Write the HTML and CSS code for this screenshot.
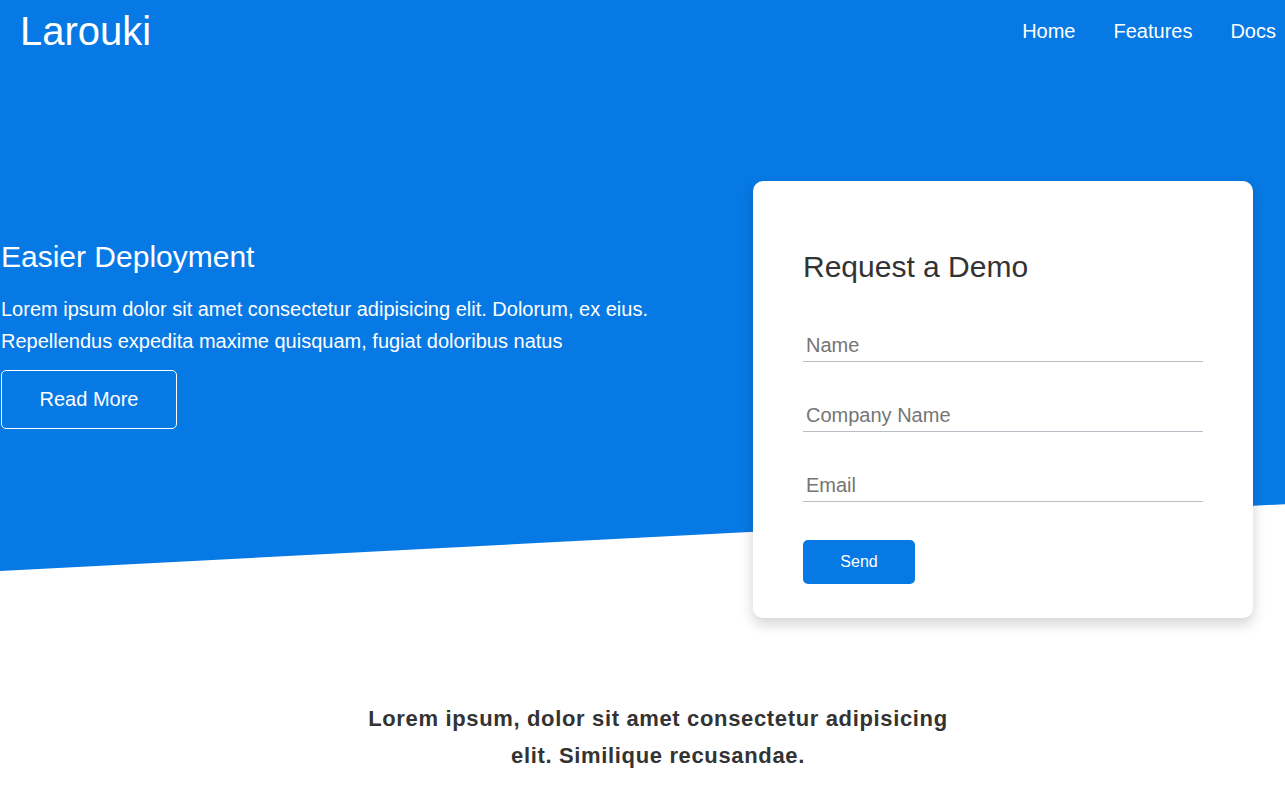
FILE: index.html
```html
<!DOCTYPE html>
<html lang="en">
<head>
<meta charset="UTF-8">
<title>Larouki</title>
<link rel="stylesheet" href="styles.css">
</head>
<body>
<section class="hero">
  <header class="navbar">
    <div class="logo">Larouki</div>
    <nav class="nav">
      <a href="#">Home</a>
      <a href="#">Features</a>
      <a href="#">Docs</a>
    </nav>
  </header>
  <div class="hero-body">
    <div class="intro">
      <h1>Easier Deployment</h1>
      <p>Lorem ipsum dolor sit amet consectetur adipisicing elit. Dolorum, ex eius.<br>Repellendus expedita maxime quisquam, fugiat doloribus natus</p>
      <a href="#" class="btn-outline">Read More</a>
    </div>
    <div class="card">
      <h2>Request a Demo</h2>
      <form class="form">
        <input type="text" placeholder="Name">
        <input type="text" placeholder="Company Name">
        <input type="email" placeholder="Email">
        <button type="button" class="btn-send">Send</button>
      </form>
    </div>
  </div>
</section>
<section class="tagline-wrap">
  <h3 class="tagline">Lorem ipsum, dolor sit amet consectetur adipisicing elit. Similique recusandae.</h3>
</section>
</body>
</html>
```

FILE: styles.css
```css
* { box-sizing: border-box; }
body {
  margin: 0;
  font-family: "Liberation Sans", Arial, sans-serif;
  color: #333;
  background: #fff;
  overflow: hidden;
}
.hero {
  position: relative;
  color: #fff;
}
.hero::before {
  content: "";
  position: absolute;
  left: 0; right: 0; top: 0;
  height: 571px;
  background: #0779e4;
  clip-path: polygon(0 0, 100% 0, 100% 88.3%, 0 100%);
  z-index: -1;
}
.navbar {
  height: 62px;
  display: flex;
  justify-content: space-between;
  align-items: center;
  padding: 0 9px 0 20px;
}
.logo {
  font-size: 40px;
  line-height: 1;
}
.nav {
  display: flex;
  gap: 38px;
}
.nav a {
  color: #fff;
  text-decoration: none;
  font-size: 20px;
  line-height: 1;
}
.hero-body {
  display: flex;
  justify-content: space-between;
  align-items: flex-start;
  padding: 119px 32px 0 1px;
}
.intro {
  margin-top: 58px;
}
.intro h1 {
  margin: 0 0 18px;
  font-size: 30px;
  font-weight: normal;
  line-height: 36px;
}
.intro p {
  margin: 0 0 13px;
  font-size: 20px;
  line-height: 32px;
}
.btn-outline {
  display: inline-flex;
  align-items: center;
  justify-content: center;
  width: 176px;
  height: 59px;
  border: 1px solid #fff;
  border-radius: 5px;
  color: #fff;
  text-decoration: none;
  font-size: 20px;
}
.card {
  width: 500px;
  background: #fff;
  color: #333;
  border-radius: 10px;
  box-shadow: 0 6px 14px rgba(0, 0, 0, 0.18);
  padding: 68px 50px 34px;
}
.card h2 {
  margin: 0 0 41px;
  font-size: 30px;
  font-weight: normal;
  line-height: 36px;
}
.form {
  display: flex;
  flex-direction: column;
  align-items: flex-start;
}
.form input {
  width: 400px;
  height: 36px;
  padding: 3px 3px 0;
  border: none;
  border-bottom: 1px solid #b7bec6;
  font-family: "Liberation Sans", Arial, sans-serif;
  font-size: 20px;
  color: #333;
  outline: none;
  margin-bottom: 34px;
  background: transparent;
}
.form input::placeholder {
  color: #757575;
}
.form input:last-of-type {
  margin-bottom: 38px;
}
.btn-send {
  width: 112px;
  height: 44px;
  background: #0779e4;
  color: #fff;
  border: none;
  border-radius: 5px;
  font-family: "Liberation Sans", Arial, sans-serif;
  font-size: 16px;
}
.tagline-wrap {
  padding: 82px 0 0 31px;
}
.tagline {
  max-width: 600px;
  margin: 0 auto;
  text-align: center;
  font-size: 22px;
  letter-spacing: 0.65px;
  line-height: 37px;
  font-weight: bold;
  color: #333;
}
```
